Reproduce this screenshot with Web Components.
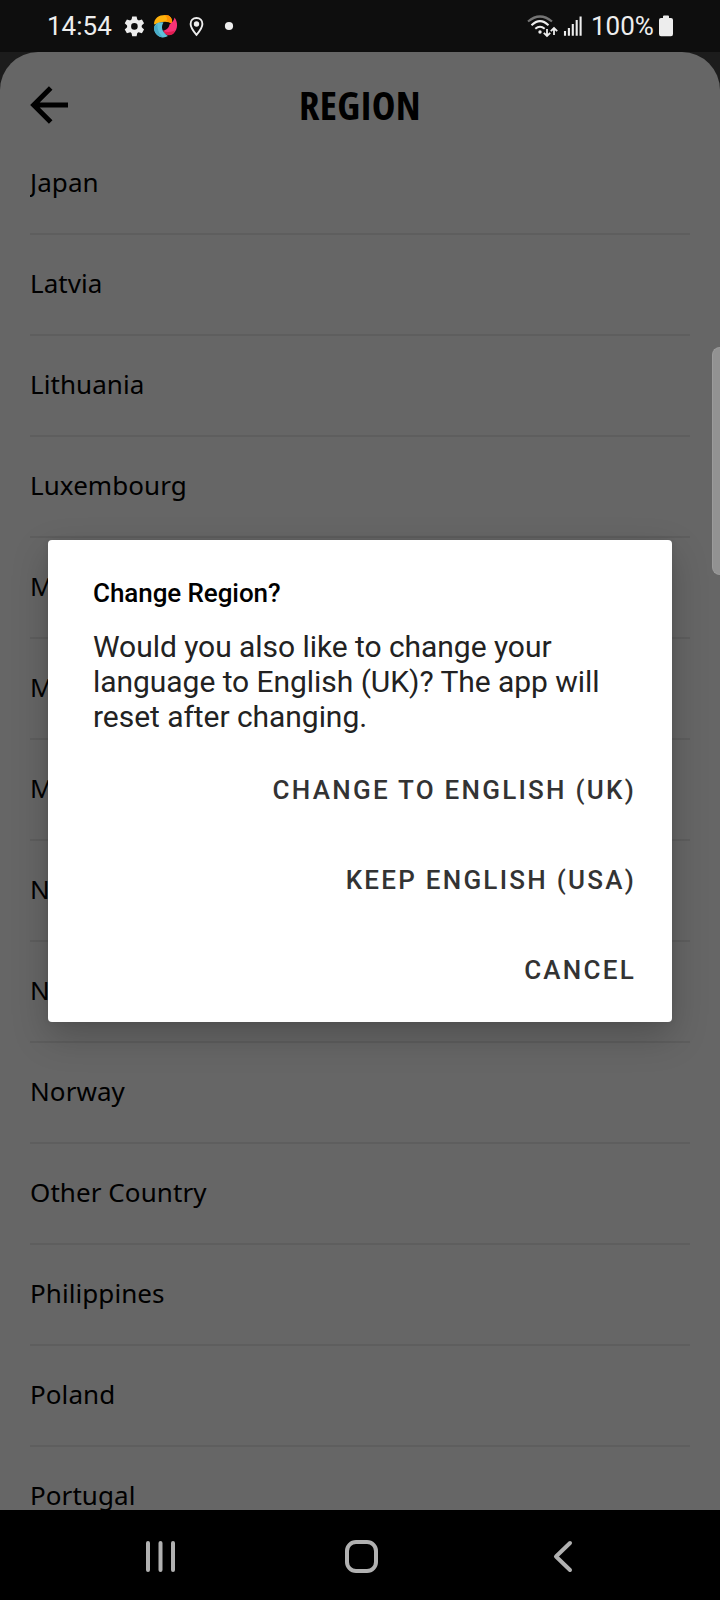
<!DOCTYPE html>
<html lang="en">
<head>
<meta charset="utf-8">
<title>Region</title>
<style>
html,body{margin:0;padding:0;background:#000;overflow:hidden}
</style>
</head>
<body>
<phone-screen></phone-screen>
<script>
const define = (name, html) => customElements.define(name, class extends HTMLElement {
  constructor() {
    super();
    const t = document.createElement('template');
    t.innerHTML = html;
    this.attachShadow({ mode: 'open' }).append(t.content.cloneNode(true));
  }
});

define('status-bar', `
<style>
:host{display:flex;justify-content:space-between;align-items:flex-start;box-sizing:border-box;height:52px;padding:0 46px 0 47px;background:#0e0e0e;color:#ededed;font:26px/52px Roboto,sans-serif}
div{display:flex;height:52px}
svg{display:block;height:52px;flex:none}
.time{width:69px}
.pct{width:68px}
</style>
<div>
  <span class="time">14:54</span>
  <svg width="124" viewBox="116 0 124 52">
    <g transform="translate(134.4 26.4)" fill="#ededed">
      <path fill-rule="evenodd" d="M-7.300 0a7.300 7.300 0 1 0 14.600 0a7.300 7.300 0 1 0-14.600 0ZM-3.3 0a3.3 3.3 0 1 0 6.600 0a3.300 3.300 0 1 0-6.600 0Z"/>
      <path d="M-2.200-9.900h4.400l.9 4.200h-6.200z"/>
      <path d="M-2.200-9.900h4.400l.9 4.200h-6.200z" transform="rotate(60)"/>
      <path d="M-2.200-9.900h4.400l.9 4.200h-6.200z" transform="rotate(120)"/>
      <path d="M-2.200-9.900h4.400l.9 4.200h-6.200z" transform="rotate(180)"/>
      <path d="M-2.200-9.900h4.400l.9 4.200h-6.200z" transform="rotate(240)"/>
      <path d="M-2.200-9.900h4.400l.9 4.200h-6.200z" transform="rotate(300)"/>
    </g>
    <path d="M154 24.500C154 18 159 15 165 15C170 15 172.500 18 172 24C169 21.500 164 21 159 23Z" fill="#ffb20d"/>
    <path d="M164 15C170 14.500 173 18 172 24C169.500 22 168 21.500 166 21.200C168 19 167 16.500 164 15Z" fill="#ff9100"/>
    <path d="M174.500 17.500C178 22 178 29 174 33C170.500 36.600 165 35 163 30.500C166 30.500 169 28 169.500 24.500C172 22.500 174.500 20 174.500 17.500Z" fill="#f73378"/>
    <path d="M163.500 31C168 33 172 31.500 175 30.500C173 36.500 165.500 37 163.500 31Z" fill="#e01e50"/>
    <path d="M154 27C155 23.500 159 21.500 163.500 22.500C160.500 27 162 32 168 36C161.500 40 153.500 35 154 27Z" fill="#5fc1da"/>
    <path d="M157.500 24C157 29 159 34 163 37.500C158 37 153.500 32 154 27Z" fill="#48acc8"/>
    <path d="M196.500 18c-3.500 0-5.900 2.600-5.900 6c0 4 5.900 10.900 5.900 10.900s5.900-6.900 5.900-10.900c0-3.400-2.400-6-5.900-6z" fill="none" stroke="#ededed" stroke-width="1.900"/>
    <circle cx="196.500" cy="24" r="2.700" fill="#ededed"/>
    <circle cx="229" cy="26" r="4.100" fill="#ededed"/>
  </svg>
</div>
<div>
  <svg width="64" viewBox="527 0 64 52" fill="none" stroke="#ededed" stroke-width="2">
    <path d="M528 21.500Q540 11.500 552 21.500" stroke="#747474" stroke-width="2.200"/>
    <path d="M531.500 25.300Q540 17 548.500 25.300"/>
    <path d="M535.300 28.800Q540 24.800 544.700 28.800"/>
    <circle cx="540" cy="32" r="1.700" fill="#ededed" stroke="none"/>
    <path d="M547 29v7M543.800 32.800l3.200 3.200l3.200-3.200M554 35v-7M550.800 31.200l3.200-3.200l3.200 3.200" stroke-width="1.800"/>
    <path d="M565 31v4.800M568.900 28v7.800M572.800 24v11.800M576.700 20v15.800M580.600 16.500v19.300" stroke-width="2.100"/>
  </svg>
  <span class="pct">100%</span>
  <svg width="15" viewBox="659 0 15 52"><path d="M661 18h2v-1.500q0-1 1-1h4q1 0 1 1V18h2q2 0 2 2v14q0 2.300-2 2.300h-10q-2 0-2-2.300V20q0-2 2-2z" fill="#ededed"/></svg>
</div>`);

define('app-header', `
<style>
:host{display:grid;grid-template-columns:120px 1fr 120px;height:82px}
svg{display:block}
h1{margin:0;text-align:center;color:#000;font:700 40px/106px "Open Sans","Noto Sans",sans-serif;font-stretch:75%;letter-spacing:.4px;white-space:nowrap}
</style>
<svg width="120" height="82" viewBox="0 52 120 82" fill="none" stroke="#000" stroke-width="5"><path d="M68 105H34M50.700 88L33.700 105L50.700 122"/></svg>
<h1><slot></slot></h1>`);

define('region-row', `
<style>
:host{display:flex;align-items:center;box-sizing:border-box;height:101px;padding-bottom:3px;border-bottom:2px solid #5e5e5e;flex:none;overflow:hidden;color:#000;font:26px/36px "Noto Sans",sans-serif;letter-spacing:.07px}
</style><slot></slot>`);

define('region-list', `
<style>:host{display:flex;flex-direction:column;flex:1;min-height:0;overflow:hidden;padding:0 30px}</style><slot></slot>`);

define('dialog-button', `
<style>
:host{display:flex;justify-content:flex-end;align-items:center;height:90px;color:#333;font:500 26px/30px Roboto,sans-serif;letter-spacing:2.25px}
</style><slot></slot>`);

define('alert-dialog', `
<style>
:host{display:flex;flex-direction:column;box-sizing:border-box;width:624px;height:482px;border-radius:4px;background:#fff;box-shadow:0 14px 36px rgba(0,0,0,.22),0 0 6px rgba(0,0,0,.08);font-family:Roboto,sans-serif}
h2{margin:37px 45px 0;font-size:26px;line-height:32px;font-weight:500;letter-spacing:-.07px;color:#000}
p{margin:20px 45px 0;width:530px;font-size:30px;line-height:35px;letter-spacing:-.05px;color:#222}
nav{display:flex;flex-direction:column;margin:11px 36px 0 45px}
</style>
<h2><slot name="title"></slot></h2>
<p><slot name="message"></slot></p>
<nav><slot></slot></nav>`);

define('nav-bar', `
<style>:host{display:block;height:90px;background:#000}svg{display:block}</style>
<svg width="720" height="90" viewBox="0 1510 720 90" fill="none" stroke="#b1b1b1" stroke-width="4" stroke-linecap="round">
<path d="M148 1543v27M160.500 1543v27M173 1543v27"/>
<rect x="347" y="1542" width="29" height="29" rx="9"/>
<path d="M570 1543L556 1556.500L570 1570" stroke-linejoin="round"/>
</svg>`);

define('phone-screen', `
<style>
:host{display:flex;flex-direction:column;position:relative;width:720px;height:1600px;overflow:hidden;background:#1c1c1c}
main{display:flex;flex-direction:column;flex:1;min-height:0;background:#666;border-radius:38px 38px 0 0;overflow:hidden}
alert-dialog{position:absolute;left:48px;top:540px}
.edge{position:absolute;right:0;top:347px;width:8px;height:228px;box-sizing:border-box;background:#929292;border:1px solid #9b9b9b;border-right:0;border-radius:8px 0 0 8px}
</style>
<status-bar></status-bar>
<main>
<app-header>REGION</app-header>
<region-list>
<region-row>Japan</region-row><region-row>Latvia</region-row><region-row>Lithuania</region-row><region-row>Luxembourg</region-row>
<region-row>M</region-row><region-row>M</region-row><region-row>M</region-row><region-row>N</region-row><region-row>N</region-row>
<region-row>Norway</region-row><region-row>Other Country</region-row><region-row>Philippines</region-row><region-row>Poland</region-row><region-row>Portugal</region-row>
</region-list>
</main>
<nav-bar></nav-bar>
<alert-dialog>
<span slot="title">Change Region?</span>
<span slot="message">Would you also like to change your language to English (UK)? The app will reset after changing.</span>
<dialog-button>CHANGE TO ENGLISH (UK)</dialog-button>
<dialog-button>KEEP ENGLISH (USA)</dialog-button>
<dialog-button>CANCEL</dialog-button>
</alert-dialog>
<div class="edge"></div>`);
</script>
</body>
</html>
